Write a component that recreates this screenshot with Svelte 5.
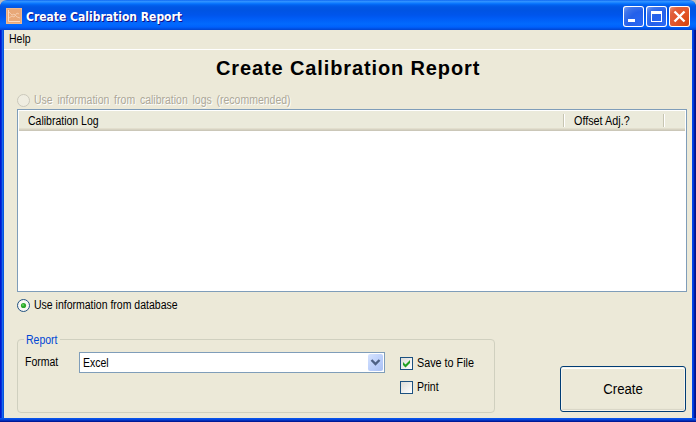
<script>
  let source = $state('database');
  let saveToFile = $state(true);
  let print = $state(false);
</script>

<div class="window">
  <header class="titlebar">
    <svg class="appicon" width="16" height="16" viewBox="0 0 16 16">
      <rect width="16" height="16" fill="#e8a878" />
      <rect x=".5" y=".5" width="15" height="15" fill="none" stroke="#eeb88e" />
      <path d="M2.5 2v11.5H14" fill="none" stroke="#fbdcc4" />
      <path d="M3 4l3 3 2-1 3 3 3 1M3 10l3-2 2 1 3-4 2 1" fill="none" stroke="#f6d2b6" stroke-width=".8" />
    </svg>
    <span class="caption">Create Calibration Report</span>
    <div class="controls">
      <button class="ctl" aria-label="Minimize">
        <svg width="21" height="21"><rect x="5" y="13" width="7" height="3" fill="#fff" /></svg>
      </button>
      <button class="ctl" aria-label="Maximize">
        <svg width="21" height="21"><path d="M5 5h11v11H5zM6 8v7h9V8z" fill="#fff" fill-rule="evenodd" /></svg>
      </button>
      <button class="ctl close" aria-label="Close">
        <svg width="21" height="21"><path d="M5.500 5.500l10 10M15.500 5.500l-10 10" stroke="#fff" stroke-width="2.400" /></svg>
      </button>
    </div>
  </header>

  <nav class="menu"><span class="txt">Help</span></nav>

  <main>
    <h1>Create Calibration Report</h1>

    <div class="radio disabled">
      <svg width="13" height="13"><circle cx="6.5" cy="6.5" r="6" fill="#efede1" stroke="#cac8bb" /></svg>
      <span class="txt logs">Use information from calibration logs (recommended)</span>
    </div>

    <section class="list">
      <div class="head">
        <div class="col log"><span class="txt">Calibration Log</span></div>
        <div class="col adj"><span class="txt wide">Offset Adj.?</span></div>
        <div class="col rest"></div>
      </div>
    </section>

    <div class="radio second">
      <svg width="13" height="13">
        <circle cx="6.5" cy="6.5" r="6" fill="#f7f7f4" stroke="#21517f" />
        {#if source === 'database'}
          <circle cx="6.5" cy="6.5" r="2.6" fill="#2da82d" />
          <circle cx="6" cy="6" r="1" fill="#62d45e" />
        {/if}
      </svg>
      <span class="txt">Use information from database</span>
    </div>

    <div class="bottom">
      <div class="group">
        <span class="legend"><span class="txt">Report</span></span>
        <span class="label"><span class="txt">Format</span></span>
        <div class="combo">
          <span class="txt">Excel</span>
          <div class="drop">
            <svg width="15" height="17"><path d="M3.5 6l4 4 4-4" fill="none" stroke="#4d6185" stroke-width="2.4" /></svg>
          </div>
        </div>
        <div class="checks">
          <div class="check">
            <i class="box">
              {#if saveToFile}
                <svg width="11" height="11"><path d="M2 4v3l2.500 2.500L9 5V2L4.500 6.500z" fill="#21a121" /></svg>
              {/if}
            </i>
            <span class="txt wide">Save to File</span>
          </div>
          <div class="check">
            <i class="box">
              {#if print}
                <svg width="11" height="11"><path d="M2 4v3l2.500 2.500L9 5V2L4.500 6.500z" fill="#21a121" /></svg>
              {/if}
            </i>
            <span class="txt">Print</span>
          </div>
        </div>
      </div>
      <button class="create"><span>Create</span></button>
    </div>
  </main>
</div>

<style>
  :global(body) { background: #b8bcc0; }
  .window {
    box-sizing: border-box;
    width: 696px;
    height: 422px;
    padding: 0 4px 4px;
    border-radius: 7px 7px 0 0;
    overflow: hidden;
    display: flex;
    flex-direction: column;
    font: 12px/14px "Liberation Sans", Arial, sans-serif;
    color: #000;
    white-space: nowrap;
    background:
      linear-gradient(#0a5bf0, #0441d8 50%, #001ea0 75%, #00138c) bottom / 100% 4px no-repeat,
      linear-gradient(90deg, #0019cf 1px, #0831d9 1px 2px, #166aee 2px 3px, #0855dd 3px) left / 4px 100% no-repeat,
      linear-gradient(90deg, #0046e8 1px, #003adb 1px 2px, #001ea0 2px 3px, #00138c 3px) right / 4px 100% no-repeat;
  }
  /* Narrow dialog lettering */
  .txt {
    display: inline-block;
    transform: scaleX(0.875);
    transform-origin: 0 50%;
  }
  .txt.wide { transform: scaleX(0.9); }
  .txt.logs { word-spacing: 2.1px; }
  .titlebar {
    height: 30px;
    margin: 0 -4px;
    padding: 0 6px;
    box-sizing: border-box;
    display: flex;
    flex: none;
    align-items: center;
    background: linear-gradient(#0058ee 0, #3593ff 1px, #288eff 2px, #127dff 3px, #036ffc 4px, #0262ee 5px, #0057e5 7px, #0054e3 10px, #0055eb 15px, #005bf5 18px, #026afe 24px, #0061fc 27px, #0144d0 30px);
  }
  .appicon { margin-top: 2px; }
  .caption {
    flex: 1;
    margin: 4px 0 0 4px;
    color: #fff;
    font: bold 12px/16px "DejaVu Sans Condensed", "DejaVu Sans", sans-serif;
    text-shadow: 1px 1px #0f1089;
  }
  .controls { display: flex; gap: 2px; margin-top: 3px; }
  .ctl {
    width: 21px;
    height: 21px;
    padding: 0;
    border: 0;
    border-radius: 3px;
    background: radial-gradient(circle at 90% 90%, #2a68f4 0, #2460ea 50%, #3f74ea 75%, #86a8f4 100%);
    box-shadow: inset 0 0 0 1px #fff;
  }
  .ctl svg { display: block; }
  .close { background: radial-gradient(circle at 90% 90%, #d8440e 0, #e2552a 50%, #e0603c 75%, #f1a18a 100%); }
  .menu {
    height: 19px;
    flex: none;
    padding-left: 5px;
    background: #ece9d8;
    border-bottom: 1px solid #fff;
    line-height: 19px;
  }
  main {
    flex: 1;
    background: #ece9d8;
    padding: 5px 5px 0 13px;
    display: flex;
    flex-direction: column;
  }
  h1 {
    margin: 0;
    padding-left: 199px;
    font: bold 20px/27px "Liberation Sans", Arial, sans-serif;
    letter-spacing: 0.88px;
  }
  .radio {
    display: flex;
    align-items: center;
    gap: 4px;
    height: 14px;
  }
  .disabled { margin-top: 11px; color: #aca899; text-shadow: 1px 1px #fff; }
  .list {
    box-sizing: border-box;
    height: 183px;
    margin-top: 2px;
    border: 1px solid #7f9db9;
    background: #fff;
    padding: 1px;
  }
  .head {
    display: flex;
    height: 20px;
    background: linear-gradient(#ebeadb 17px, #e2decd 17px 18px, #d6d2c2 18px 19px, #cbc7b8 19px);
  }
  .col {
    box-sizing: border-box;
    height: 13px;
    margin-top: 3px;
    line-height: 14px;
    border-right: 1px solid #c7c5b2;
    box-shadow: 1px 0 #fff;
  }
  .log { width: 545px; padding-left: 9px; }
  .adj { width: 100px; padding-left: 10px; }
  .rest { flex: 1; border: 0; box-shadow: none; }
  .second { margin-top: 6px; }
  .bottom { display: flex; justify-content: space-between; margin-top: 27px; }
  .group {
    box-sizing: border-box;
    width: 478px;
    height: 74px;
    border: 1px solid #d0d0bf;
    border-radius: 4px;
    position: relative;
    display: flex;
    align-items: flex-start;
    padding: 12px 0 0 7px;
  }
  .legend {
    position: absolute;
    left: 6px;
    top: -7px;
    width: 34px;
    padding: 0 0 0 2px;
    background: #ece9d8;
    color: #0046d5;
  }
  .label { width: 54px; margin-top: 3px; }
  .combo {
    box-sizing: border-box;
    width: 306px;
    height: 21px;
    border: 1px solid #7f9db9;
    background: #fff;
    display: flex;
    justify-content: space-between;
    padding: 1px 1px 1px 3px;
    line-height: 19px;
  }
  .drop {
    width: 15px;
    height: 17px;
    border-radius: 2px;
    background: linear-gradient(135deg, #d6e3fe, #b9cdfa 60%, #aac0f4);
  }
  .drop svg { display: block; }
  .checks { margin: 4px 0 0 15px; display: flex; flex-direction: column; gap: 10px; }
  .check { display: flex; align-items: center; gap: 4px; height: 14px; }
  .box {
    box-sizing: border-box;
    width: 13px;
    height: 13px;
    border: 1px solid #1c5180;
    background: linear-gradient(135deg, #dcdcd7, #fff);
  }
  .box svg { display: block; }
  .create {
    box-sizing: border-box;
    width: 126px;
    height: 46px;
    margin: 27px 1px 0 0;
    padding: 0;
    border: 1px solid #003c74;
    border-radius: 3px;
    background: #ece9d8;
    box-shadow: inset 0 0 0 1px #f6f4ec, inset 0 2px #fff, inset -1px -2px 1px #d9d5c6;
    font: 14px/20px "Liberation Sans", Arial, sans-serif;
    color: #000;
  }
  .create span { display: inline-block; transform: scaleX(0.94); }
</style>
